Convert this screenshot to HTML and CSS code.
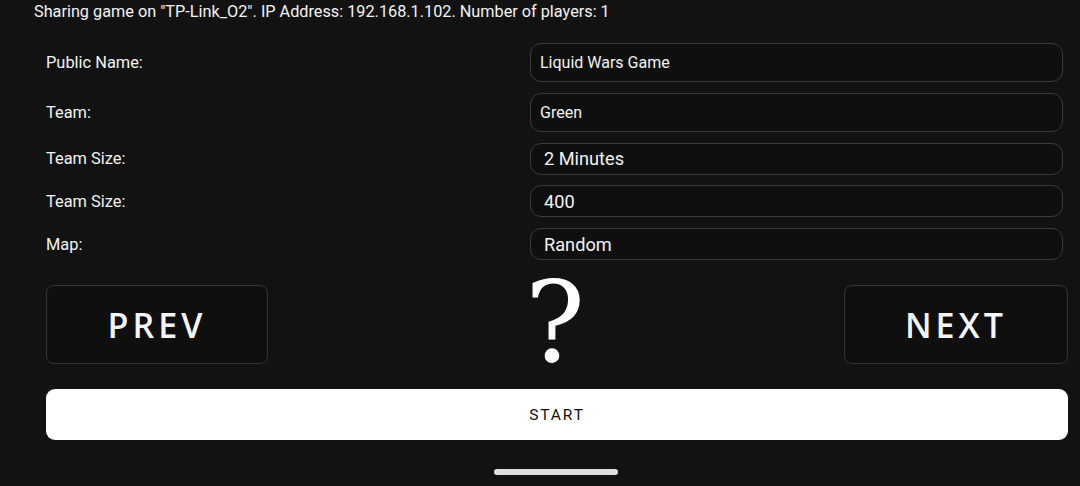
FILE: index.html
```html
<!DOCTYPE html>
<html>
<head>
<meta charset="utf-8">
<link rel="stylesheet" href="styles.css">
</head>
<body>
<div class="screen">
  <div class="status">Sharing game on "TP-Link_O2". IP Address: 192.168.1.102. Number of players: 1</div>
  <div class="form">
    <div class="label">Public Name:</div>
    <div class="field tall">Liquid Wars Game</div>
    <div class="label">Team:</div>
    <div class="field tall">Green</div>
    <div class="label">Team Size:</div>
    <div class="field big">2 Minutes</div>
    <div class="label">Team Size:</div>
    <div class="field big">400</div>
    <div class="label">Map:</div>
    <div class="field big">Random</div>
  </div>
  <div class="nav">
    <div class="navbtn prev">PREV</div>
    <div class="mark">?</div>
    <div class="navbtn next">NEXT</div>
  </div>
  <div class="start">START</div>
  <div class="homebar"></div>
</div>
</body>
</html>
```
FILE: styles.css
```css
html, body {
  margin: 0;
  padding: 0;
  background: #121212;
}
.screen {
  width: 1080px;
  height: 486px;
  display: flex;
  flex-direction: column;
  font-family: Roboto, "Liberation Sans", sans-serif;
  color: #f2f2f2;
}
.status {
  padding-left: 34px;
  font-size: 16.25px;
  line-height: 24px;
  height: 24px;
}
.form {
  margin: 19px 17px 0 46px;
  display: grid;
  grid-template-columns: 484px 1fr;
  row-gap: 10.75px;
  align-items: center;
}
.label {
  font-size: 16.4px;
}
.field {
  box-sizing: border-box;
  border: 1.5px solid #3a3a3a;
  border-radius: 11px;
  background: #0f0f0f;
  display: flex;
  align-items: center;
}
.field.tall {
  height: 39px;
  padding-left: 9px;
  font-size: 16px;
}
.field.big {
  height: 32px;
  padding-left: 13px;
  font-size: 18.2px;
}
.nav {
  margin: 25px 12px 0 46px;
  display: flex;
  justify-content: space-between;
  align-items: center;
  height: 79px;
}
.navbtn {
  box-sizing: border-box;
  width: 222px;
  height: 79px;
  border: 1.5px solid #333;
  border-radius: 8px;
  background: #0f0f0f;
  display: flex;
  align-items: center;
  justify-content: center;
  font-family: "Open Sans", "Noto Sans", sans-serif;
  font-weight: 600;
  font-size: 34px;
  letter-spacing: 4px;
  color: #f5f5f5;
}
.navbtn.next {
  width: 224px;
}
.mark {
  font-family: "DejaVu Serif", serif;
  font-size: 112px;
  line-height: 79px;
  color: #fff;
  margin-right: 2px;
  position: relative;
  top: -2px;
}
.start {
  margin: 25px 12px 0 46px;
  height: 51px;
  border-radius: 9px;
  background: #fff;
  color: #111;
  display: flex;
  align-items: center;
  justify-content: center;
  font-size: 15.5px;
  letter-spacing: 1.9px;
}
.homebar {
  align-self: center;
  margin-top: 29px;
  margin-left: 32px;
  width: 124px;
  height: 6px;
  border-radius: 3px;
  background: #e0e0e0;
}
```
